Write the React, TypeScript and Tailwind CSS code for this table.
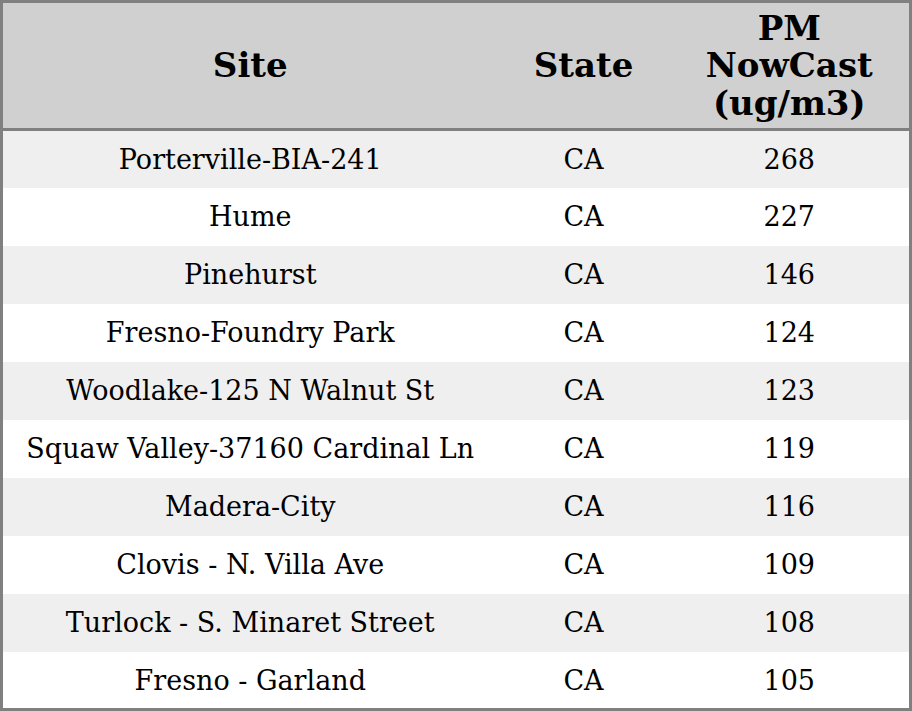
const rows: [string, string, number][] = [
  ["Porterville-BIA-241", "CA", 268],
  ["Hume", "CA", 227],
  ["Pinehurst", "CA", 146],
  ["Fresno-Foundry Park", "CA", 124],
  ["Woodlake-125 N Walnut St", "CA", 123],
  ["Squaw Valley-37160 Cardinal Ln", "CA", 119],
  ["Madera-City", "CA", 116],
  ["Clovis - N. Villa Ave", "CA", 109],
  ["Turlock - S. Minaret Street", "CA", 108],
  ["Fresno - Garland", "CA", 105],
];

export default function App() {
  return (
    <div className="h-[711px] w-[912px] bg-white font-['DejaVu_Serif',serif] text-black">
      <table className="h-full w-full border-collapse border-[3px] border-[#808080]">
        <thead>
          <tr className="h-[128px] border-b-[3px] border-[#808080] bg-[#d0d0d0] text-[34px] font-bold leading-[1.1]">
            <th className="w-[496px] pt-px text-center">Site</th>
            <th className="w-[172px] pt-px text-center">State</th>
            <th className="pt-px text-center">
              PM
              <br />
              NowCast
              <br />
              (ug/m3)
            </th>
          </tr>
        </thead>
        <tbody className="text-[27px]">
          {rows.map(([site, state, val], i) => (
            <tr
              key={site}
              className={i % 2 === 0 ? "h-[57.7px] bg-[#efefef]" : "h-[57.7px] bg-white"}
            >
              <td className="pt-0.5 text-center">{site}</td>
              <td className="pt-0.5 text-center">{state}</td>
              <td className="pt-0.5 text-center">{val}</td>
            </tr>
          ))}
        </tbody>
      </table>
    </div>
  );
}
